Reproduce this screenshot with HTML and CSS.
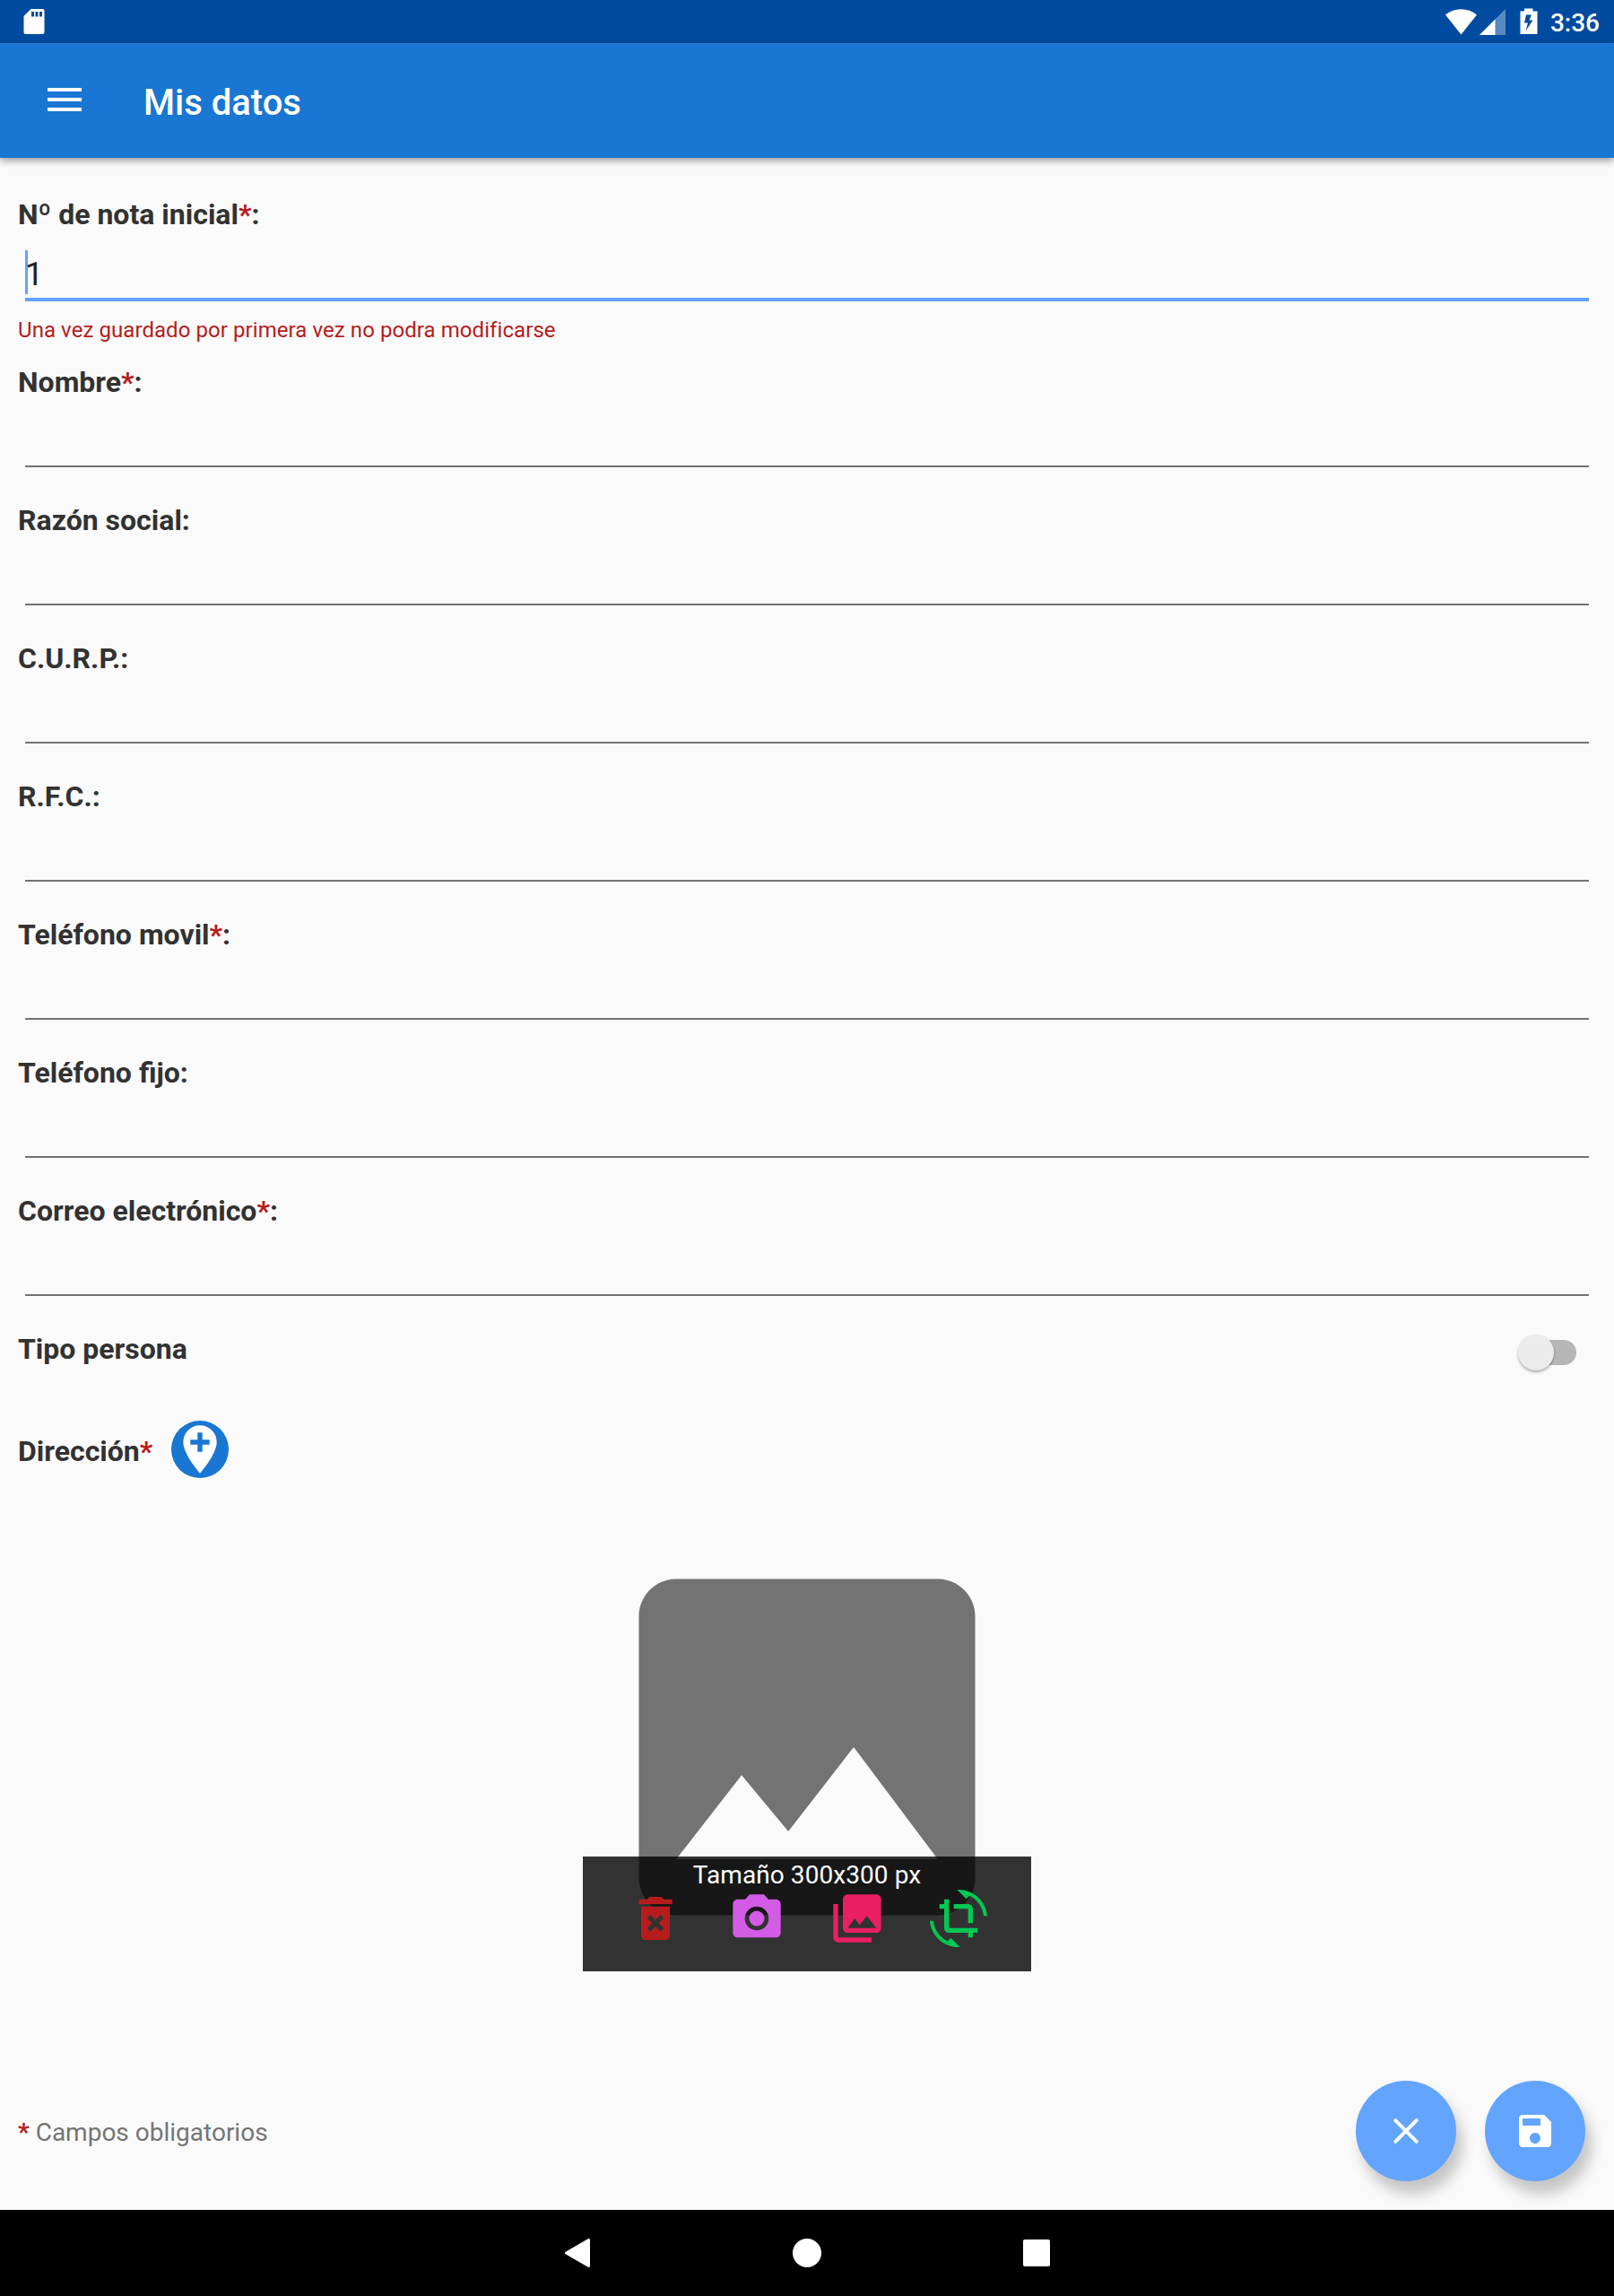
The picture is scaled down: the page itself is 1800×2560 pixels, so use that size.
FILE: index.html
```html
<!DOCTYPE html>
<html lang="es">
  <head>
    <meta charset="UTF-8" />
    <meta name="viewport" content="width=device-width, initial-scale=1.0" />
    <title>Mis datos</title>
    <link rel="stylesheet" href="styles.css">
  </head>
  <body>
    <div class="status-bar">
      <svg class="sd-icon" width="24" height="28" viewBox="0 0 24 28">
        <path fill="#fff" fill-rule="evenodd" d="M8.500 0H21.500Q23.500 0 23.500 2V26Q23.500 28 21.500 28H2.500Q.5 28 .5 26V8ZM9 3V8.500H12V3ZM13.500 3V8.500H16.500V3ZM18 3V8.500H21V3Z" />
      </svg>
      <svg class="system-icons" width="104" height="32" viewBox="0 0 104 32">
        <path fill="#fff" d="M0 8.500C10 .3 25 .3 35 8.500L17.500 30.500Z" />
        <path fill="#fff" fill-opacity=".35" d="M67 2V31H38Z" />
        <path fill="#fff" d="M55.500 13.500V31H38Z" />
        <path fill="#fff" fill-rule="evenodd" d="M88 1.500H97.500V4.500H102.500V30H83.500V4.500H88ZM90 8.500L88 17.500H92L89.500 26.500L97.500 14.500H93.500L96 8.500Z" />
      </svg>
      <span class="time">3:36</span>
    </div>

    <div class="toolbar">
      <svg class="menu-icon" width="38" height="26" viewBox="0 0 38 26">
        <path fill="#fff" d="M0 0H38V4H0ZM0 11H38V15H0ZM0 22H38V26H0Z" />
      </svg>
      <h1>Mis datos</h1>
    </div>

    <div class="container">
      <div class="field first">
        <label for="nota">Nº de nota inicial<span class="req">*</span>:</label>
        <div class="input focused"><span class="cursor"></span><span id="nota">1</span></div>
        <p class="hint">Una vez guardado por primera vez no podra modificarse</p>
      </div>
      <div class="field">
        <label>Nombre<span class="req">*</span>:</label>
        <div class="input"></div>
      </div>
      <div class="field">
        <label>Razón social:</label>
        <div class="input"></div>
      </div>
      <div class="field">
        <label>C.U.R.P.:</label>
        <div class="input"></div>
      </div>
      <div class="field">
        <label>R.F.C.:</label>
        <div class="input"></div>
      </div>
      <div class="field">
        <label>Teléfono movil<span class="req">*</span>:</label>
        <div class="input"></div>
      </div>
      <div class="field">
        <label>Teléfono fijo:</label>
        <div class="input"></div>
      </div>
      <div class="field">
        <label>Correo electrónico<span class="req">*</span>:</label>
        <div class="input"></div>
      </div>

      <div class="row-switch">
        <label>Tipo persona</label>
        <div class="switch"><span class="thumb"></span></div>
      </div>

      <div class="row-address">
        <label>Dirección<span class="req">*</span></label>
        <svg width="64" height="64" viewBox="0 0 64 64">
          <circle cx="32" cy="32" r="32" fill="#1976d2" />
          <path fill="#fff" d="M32 5.300C21.500 5.300 13.300 13.500 13.300 24C13.300 37.500 32 58.700 32 58.700S50.700 37.500 50.700 24C50.700 13.500 42.500 5.300 32 5.300Z" />
          <path fill="#1976d2" d="M29.300 13.300H34.700V21.300H42.700V26.700H34.700V34.700H29.300V26.700H21.300V21.300H29.300Z" />
        </svg>
      </div>

      <div class="photo">
        <svg class="placeholder" width="500" height="500" viewBox="0 0 24 24">
          <path fill="#737373" d="M21 19V5c0-1.100-.9-2-2-2H5c-1.100 0-2 .9-2 2v14c0 1.100.9 2 2 2h14c1.100 0 2-.9 2-2zM8.500 13.500l2.500 3.010L14.500 12l4.500 6H5l3.500-4.500z" />
        </svg>
        <div class="photo-bar">
          <p>Tamaño 300x300 px</p>
          <div class="actions">
            <svg viewBox="0 0 24 24" fill="#b71c1c">
              <path d="M6 19c0 1.100.9 2 2 2h8c1.100 0 2-.9 2-2V7H6v12zm2.460-7.120l1.410-1.410L12 12.590l2.120-2.120 1.410 1.410L13.410 14l2.120 2.120-1.410 1.410L12 15.410l-2.120 2.120-1.410-1.410L10.590 14l-2.130-2.120zM15.500 4l-1-1h-5l-1 1H5v2h14V4z" />
            </svg>
            <svg viewBox="0 0 24 24" fill="#d35ce6">
              <circle cx="12" cy="12" r="3.200" />
              <path d="M9 2L7.170 4H4c-1.100 0-2 .9-2 2v12c0 1.100.9 2 2 2h16c1.100 0 2-.9 2-2V6c0-1.100-.9-2-2-2h-3.170L15 2H9zm3 15c-2.760 0-5-2.240-5-5s2.240-5 5-5 5 2.240 5 5-2.240 5-5 5z" />
            </svg>
            <svg viewBox="0 0 24 24" fill="#e91e63">
              <path d="M22 16V4c0-1.100-.9-2-2-2H8c-1.100 0-2 .9-2 2v12c0 1.100.9 2 2 2h12c1.100 0 2-.9 2-2zm-11-4l2.030 2.710L16 11l4 5H8l3-4zM2 6v14c0 1.100.9 2 2 2h14v-2H4V6H2z" />
            </svg>
            <svg viewBox="0 0 24 24" fill="#00c853">
              <path d="M7.470 21.490C4.200 19.930 1.860 16.760 1.500 13H0c.51 6.160 5.660 11 11.950 11 .23 0 .44-.02.66-.03L8.800 20.150l-1.330 1.340zM12.050 0c-.23 0-.44.02-.66.040l3.810 3.810 1.330-1.330C19.800 4.070 22.140 7.240 22.500 11H24c-.51-6.160-5.660-11-11.950-11zM16 14h2V8c0-1.110-.9-2-2-2h-6v2h6v6zm-8 2V4H6v2H4v2h2v8c0 1.100.89 2 2 2h8v2h2v-2h2v-2H8z" />
            </svg>
          </div>
        </div>
      </div>

      <div class="footer">
        <p><span class="req">*</span> Campos obligatorios</p>
        <div class="buttons">
          <button id="cancel" aria-label="Cancelar">
            <svg width="48" height="48" viewBox="0 0 24 24">
              <path fill="none" stroke="#fff" stroke-width="2" stroke-linecap="round" d="M6.100 6.100L17.900 17.900M17.900 6.100L6.100 17.900" />
            </svg>
          </button>
          <button id="save" aria-label="Guardar">
            <svg width="48" height="48" viewBox="0 0 24 24">
              <path fill="#fff" d="M17 3H5c-1.110 0-2 .9-2 2v14c0 1.100.89 2 2 2h14c1.100 0 2-.9 2-2V7l-4-4zm-5 16c-1.660 0-3-1.340-3-3s1.340-3 3-3 3 1.340 3 3-1.340 3-3 3zm3-10H5V5h10v4z" />
            </svg>
          </button>
        </div>
      </div>
    </div>

    <div class="nav-bar">
      <svg viewBox="0 0 32 32"><path fill="#fff" stroke="#fff" stroke-width="3" stroke-linejoin="round" d="M28.500 1.500V30.500L3.500 16Z" /></svg>
      <svg viewBox="0 0 32 32"><circle cx="16" cy="16" r="16" fill="#fff" /></svg>
      <svg viewBox="0 0 32 32"><rect x="1" y="1" width="30" height="30" rx="2" fill="#fff" /></svg>
    </div>
  </body>
</html>
```
FILE: styles.css
```css
* {
  padding: 0;
  margin: 0;
  box-sizing: border-box;
}
body {
  height: 2560px;
  display: flex;
  flex-direction: column;
  background-color: #fafafa;
  font-family: Roboto, sans-serif;
  overflow: hidden;
}
svg {
  display: block;
  flex-shrink: 0;
}
.status-bar {
  height: 48px;
  display: flex;
  align-items: center;
  padding: 0 16px 0 26px;
  background-color: #004ba0;
  color: white;
}
.system-icons {
  margin-left: auto;
  margin-right: 13px;
}
.time {
  font-size: 28px;
  font-weight: 500;
  line-height: 32px;
  padding-top: 3px;
}
.toolbar {
  height: 128px;
  display: flex;
  align-items: center;
  padding: 0 53px;
  background-color: #1976d2;
  color: white;
  box-shadow: 0 3px 8px rgba(0, 0, 0, 0.4);
}
.menu-icon {
  margin-right: 69px;
  margin-top: -2px;
}
h1 {
  font-size: 40px;
  font-weight: 500;
  line-height: 48px;
  padding-top: 5px;
}
.container {
  flex: 1;
  padding: 44px 20px 0;
}
.field {
  height: 154px;
}
.first {
  height: 187px;
}
label {
  display: block;
  height: 38px;
  font-size: 32px;
  font-weight: bold;
  line-height: 38px;
  color: #323232;
}
.req {
  color: #b71c1c;
}
.input {
  height: 76px;
  margin: 0 8px;
  border-bottom: 2px solid #737373;
  font-size: 36px;
  line-height: 42px;
  color: #212121;
}
.focused {
  position: relative;
  height: 78px;
  padding-top: 27px;
  border-bottom: 4px solid #63a4ff;
}
.cursor {
  position: absolute;
  left: 0;
  top: 21px;
  width: 3px;
  height: 49px;
  background-color: #63a4ff;
}
#nota {
  position: relative;
}
.hint {
  margin-top: 18px;
  font-size: 24px;
  line-height: 28px;
  letter-spacing: 0.07px;
  color: #b71c1c;
}
.row-switch {
  display: flex;
  justify-content: space-between;
  height: 99px;
}
.switch {
  position: relative;
  width: 64px;
  height: 28px;
  margin: 9px 22px 0 0;
  border-radius: 14px;
  background-color: #b6b6b6;
}
.thumb {
  position: absolute;
  left: -1px;
  top: -6px;
  width: 40px;
  height: 40px;
  border-radius: 50%;
  background-color: #ececec;
  box-shadow: 0 2px 3px rgba(0, 0, 0, 0.3);
}
.row-address {
  display: flex;
  align-items: center;
  gap: 21px;
  height: 64px;
}
.row-address label {
  padding-top: 2px;
}
.photo {
  position: relative;
  width: 500px;
  height: 500px;
  margin: 50px auto 0;
}
.photo-bar {
  position: absolute;
  left: 0;
  bottom: 0;
  width: 500px;
  height: 128px;
  padding: 4px 25px 0;
  background-color: rgba(0, 0, 0, 0.8);
}
.photo-bar p {
  font-size: 28px;
  line-height: 33px;
  letter-spacing: 0.08px;
  text-align: center;
  color: white;
}
.actions {
  display: flex;
  justify-content: space-around;
}
.actions svg {
  width: 64px;
  height: 64px;
}
.footer {
  display: flex;
  justify-content: space-between;
  align-items: center;
  height: 112px;
  margin: 122px 12px 0 0;
  font-size: 28px;
  color: #757575;
}
.footer p {
  line-height: 33px;
  padding-top: 2px;
}
.footer .req {
  font-weight: bold;
}
.buttons {
  display: flex;
  gap: 32px;
}
button {
  display: flex;
  align-items: center;
  justify-content: center;
  width: 112px;
  height: 112px;
  border: none;
  border-radius: 50%;
  background-color: #63a4ff;
  box-shadow: 7px 14px 16px rgba(0, 0, 0, 0.22);
}
.nav-bar {
  position: relative;
  height: 96px;
  display: flex;
  align-items: center;
  justify-content: center;
  gap: 224px;
  background-color: black;
}
.nav-bar svg {
  width: 32px;
  height: 32px;
}
```
